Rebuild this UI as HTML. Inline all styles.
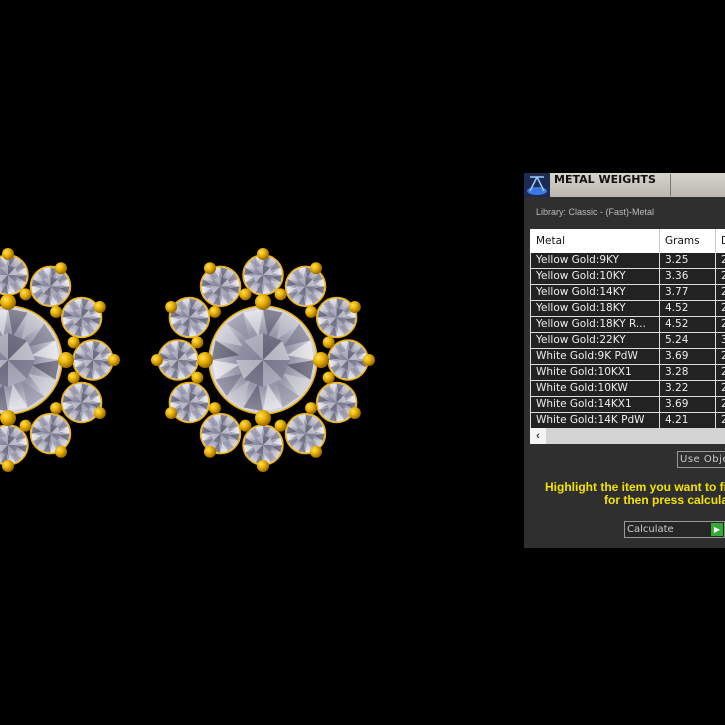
<!DOCTYPE html><html><head><style>
body{margin:0;width:725px;height:725px;background:#000;overflow:hidden;position:relative;font-family:"Liberation Sans",sans-serif}
svg{position:absolute;left:0;top:0}
.p{position:absolute;left:524px;top:172px;width:201px;height:376px;background:#2f2f2f}
.tb{position:absolute;left:524px;top:172px;width:201px;height:24px;background:linear-gradient(#d6d4cc,#b9b7ae);border-top:1px solid #000}
.tb b{position:absolute;left:30px;top:0px;font:bold 11px "DejaVu Sans",sans-serif;color:#111}
.tb i{position:absolute;left:146px;top:1px;width:1px;height:22px;background:#777}
.lib{position:absolute;left:536px;top:207px;font-size:9px;color:#bbb}
table{position:absolute;left:530px;top:229px;border-collapse:collapse;font:10.5px "DejaVu Sans",sans-serif;color:#eee;table-layout:fixed;width:200px}
td{height:15px;padding:0 0 0 5px;border:1px solid #ddd;background:#222;white-space:nowrap;overflow:hidden;line-height:15px}
tr.h td{background:#fff;color:#111;height:22px;border-color:#fff;border-right:1px solid #ccc}
.sb{position:absolute;left:530px;top:428px;width:195px;height:16px;background:#d4d4d4}
.sb span{position:absolute;left:0;top:0;width:16px;height:16px;background:#f4f4f4;color:#333;font-size:11px;text-align:center;font-weight:bold;line-height:16px}
.btn{position:absolute;left:677px;top:451px;width:60px;height:15px;border:1px solid #999;color:#ccc;font:10px "DejaVu Sans",sans-serif;line-height:15px;padding-left:2px;letter-spacing:.5px}
.y{position:absolute;left:545px;top:481px;width:300px;color:#f4e400;font:bold 12px "Liberation Sans",sans-serif;line-height:13px;white-space:nowrap}
.cal{position:absolute;left:624px;top:521px;width:97px;height:15px;border:1px solid #999;background:#262626;color:#ccc;font:10px "DejaVu Sans",sans-serif;line-height:15px;padding-left:2px}
.cal i{position:absolute;right:1px;top:1px;width:12px;height:13px;background:#3a3;color:#fff;font-size:8px;text-align:center;font-style:normal;line-height:13px}
</style></head><body>
<svg width="725" height="725" id="s">
<defs>
<radialGradient id="g" cx="35%" cy="35%" r="65%"><stop offset="0" stop-color="#ffe060"/><stop offset=".5" stop-color="#e8b000"/><stop offset="1" stop-color="#9a6a00"/></radialGradient>
<radialGradient id="d" cx="50%" cy="50%" r="55%"><stop offset="0" stop-color="#7a7a90"/><stop offset=".6" stop-color="#a8a8ba"/><stop offset="1" stop-color="#eeeef2"/></radialGradient>
<radialGradient id="c" cx="50%" cy="50%" r="55%"><stop offset="0" stop-color="#7e7e94"/><stop offset=".5" stop-color="#9a9aac"/><stop offset="1" stop-color="#e8e8ec"/></radialGradient>
</defs>
</svg>
<div class="p"></div>
<div class="tb"><svg width="26" height="24" style="position:absolute;left:0;top:0"><rect width="26" height="24" fill="#1e2a50"/><ellipse cx="13" cy="18" rx="10" ry="4" fill="#3a7ae0"/><path d="M13 4 L6 18 M13 4 L20 18 M6 4 H20" stroke="#9cf" stroke-width="1.5" fill="none"/></svg><b>METAL WEIGHTS</b><i></i></div>
<div class="lib">Library: Classic - (Fast)-Metal</div>
<table>
<col style="width:129px"><col style="width:56px"><col style="width:15px">
<tr class="h"><td>Metal</td><td>Grams</td><td>D</td></tr>
<tr><td>Yellow Gold:9KY</td><td>3.25</td><td>2</td></tr>
<tr><td>Yellow Gold:10KY</td><td>3.36</td><td>2</td></tr>
<tr><td>Yellow Gold:14KY</td><td>3.77</td><td>2</td></tr>
<tr><td>Yellow Gold:18KY</td><td>4.52</td><td>2</td></tr>
<tr><td>Yellow Gold:18KY R...</td><td>4.52</td><td>2</td></tr>
<tr><td>Yellow Gold:22KY</td><td>5.24</td><td>3</td></tr>
<tr><td>White Gold:9K PdW</td><td>3.69</td><td>2</td></tr>
<tr><td>White Gold:10KX1</td><td>3.28</td><td>2</td></tr>
<tr><td>White Gold:10KW</td><td>3.22</td><td>2</td></tr>
<tr><td>White Gold:14KX1</td><td>3.69</td><td>2</td></tr>
<tr><td>White Gold:14K PdW</td><td>4.21</td><td>2</td></tr>
</table>
<div class="sb"><span>&lsaquo;</span></div>
<div class="btn">Use Object</div>
<div class="y">Highlight the item you want to find<br><span style="padding-left:59px">for then press calculate</span></div>
<div class="cal">Calculate<i>&#9654;</i></div>
<script>
var s=document.getElementById('s'),n='http://www.w3.org/2000/svg';
function el(t,o){var e=document.createElementNS(n,t);for(var k in o)e.setAttribute(k,o[k]);s.appendChild(e);return e}
function c(x,y,r,f,st){var o={cx:x,cy:y,r:r,fill:f};if(st){o.stroke=st;o['stroke-width']=1.5}el('circle',o)}
function gem(x,y,r,fill){
c(x,y,r,fill,'#f0b000');
var cols=['#3a3a4e','#f4f4f8','#6a6a80','#d8d8e0','#4a4a60','#ffffff','#8888a0','#c8c8d4'];
for(var i=0;i<16;i++){var a1=i*Math.PI/8,a2=(i+1)*Math.PI/8,rr=r*0.95;
el('polygon',{points:(x+r*.45*Math.cos(a1+.2))+','+(y+r*.45*Math.sin(a1+.2))+' '+(x+rr*Math.cos(a1))+','+(y+rr*Math.sin(a1))+' '+(x+rr*Math.cos(a2))+','+(y+rr*Math.sin(a2)),fill:cols[(i*3)%8],opacity:.55});}
for(var i=0;i<8;i++){var a1=i*Math.PI/4,a2=(i+1)*Math.PI/4;
el('polygon',{points:x+','+y+' '+(x+r*.5*Math.cos(a1))+','+(y+r*.5*Math.sin(a1))+' '+(x+r*.5*Math.cos(a2))+','+(y+r*.5*Math.sin(a2)),fill:cols[(i*5+2)%8],opacity:.4});}
}
function ear(cx,cy){
for(var k=0;k<12;k++){var a=k*Math.PI/6;gem(cx+85*Math.cos(a),cy+85*Math.sin(a),20,'url(#d)')}
gem(cx,cy,54,'url(#c)');
for(var k=0;k<12;k++){var a=k*Math.PI/6;c(cx+106*Math.cos(a),cy+106*Math.sin(a),6,'url(#g)')}
for(var k=0;k<12;k++){var a=(k+.5)*Math.PI/6;c(cx+68*Math.cos(a),cy+68*Math.sin(a),6,'url(#g)')}
for(var k=0;k<4;k++){var a=k*Math.PI/2;c(cx+58*Math.cos(a),cy+58*Math.sin(a),8,'url(#g)')}
}
ear(8,360);ear(263,360);
</script>
</body></html>
